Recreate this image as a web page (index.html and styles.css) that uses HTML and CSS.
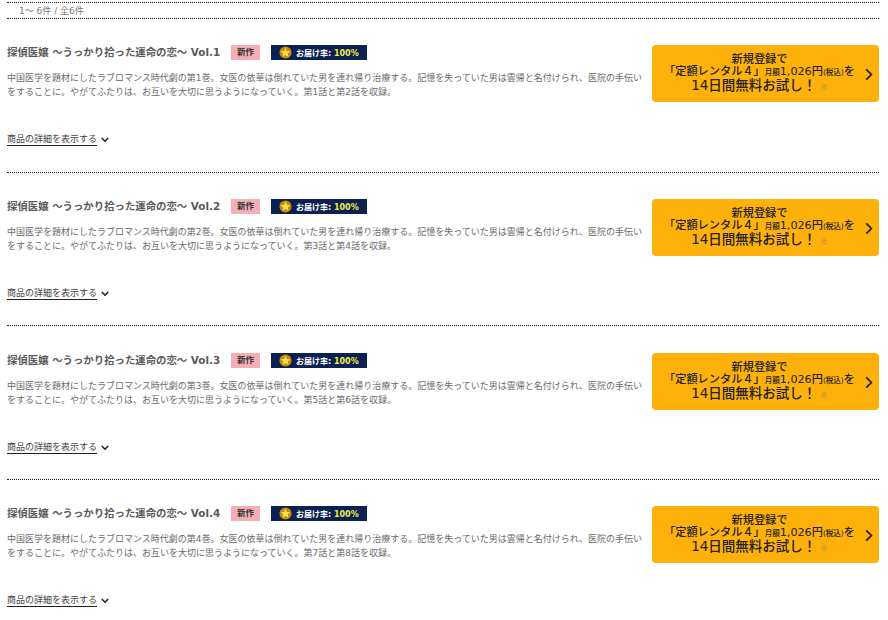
FILE: index.html
```html
<!DOCTYPE html>
<html lang="ja">
<head>
<meta charset="utf-8">
<title>探偵医嬢</title>
<link rel="stylesheet" href="styles.css">
</head>
<body>
<div class="count">1～ 6件 / 全6件</div>
<section class="item">
  <div class="main">
    <div class="head"><h2>探偵医嬢 ～うっかり拾った運命の恋～ Vol.1</h2><span class="new">新作</span>
      <span class="rate"><svg viewBox="0 0 14 14" width="13" height="13"><circle cx="7" cy="7" r="6.5" fill="#c98a10"/><path d="M7 2l1.5 3.3 3.6.4-2.7 2.4.8 3.5L7 9.8l-3.2 1.8.8-3.5-2.7-2.4 3.6-.4z" fill="#ffe14d"/></svg><span>お届け率: <b>100%</b></span></span></div>
    <p>中国医学を題材にしたラブロマンス時代劇の第1巻。女医の依華は倒れていた男を連れ帰り治療する。記憶を失っていた男は雲帰と名付けられ、医院の手伝いをすることに。やがてふたりは、お互いを大切に思うようになっていく。第1話と第2話を収録。</p>
    <div class="more"><a>商品の詳細を表示する</a><svg viewBox="0 0 10 7" width="8" height="6"><path d="M1 1l4 4 4-4" fill="none" stroke="#222" stroke-width="2"/></svg></div>
  </div>
  <a class="cta"><span class="cta-text"><span>新規登録で</span><span class="l2">「定額レンタル４」<small>月額</small>1,026円<small>(税込)</small>を</span><span class="l3">14日間無料お試し！<i>※</i></span></span><svg class="arrow" viewBox="0 0 10 16" width="8" height="13"><path d="M1.5 1.5L8 8l-6.500 6.500" fill="none" stroke="#222" stroke-width="2.200"/></svg></a>
</section>
<section class="item">
  <div class="main">
    <div class="head"><h2>探偵医嬢 ～うっかり拾った運命の恋～ Vol.2</h2><span class="new">新作</span>
      <span class="rate"><svg viewBox="0 0 14 14" width="13" height="13"><circle cx="7" cy="7" r="6.5" fill="#c98a10"/><path d="M7 2l1.5 3.3 3.6.4-2.7 2.4.8 3.5L7 9.8l-3.2 1.8.8-3.5-2.7-2.4 3.6-.4z" fill="#ffe14d"/></svg><span>お届け率: <b>100%</b></span></span></div>
    <p>中国医学を題材にしたラブロマンス時代劇の第2巻。女医の依華は倒れていた男を連れ帰り治療する。記憶を失っていた男は雲帰と名付けられ、医院の手伝いをすることに。やがてふたりは、お互いを大切に思うようになっていく。第3話と第4話を収録。</p>
    <div class="more"><a>商品の詳細を表示する</a><svg viewBox="0 0 10 7" width="8" height="6"><path d="M1 1l4 4 4-4" fill="none" stroke="#222" stroke-width="2"/></svg></div>
  </div>
  <a class="cta"><span class="cta-text"><span>新規登録で</span><span class="l2">「定額レンタル４」<small>月額</small>1,026円<small>(税込)</small>を</span><span class="l3">14日間無料お試し！<i>※</i></span></span><svg class="arrow" viewBox="0 0 10 16" width="8" height="13"><path d="M1.5 1.5L8 8l-6.500 6.500" fill="none" stroke="#222" stroke-width="2.200"/></svg></a>
</section>
<section class="item">
  <div class="main">
    <div class="head"><h2>探偵医嬢 ～うっかり拾った運命の恋～ Vol.3</h2><span class="new">新作</span>
      <span class="rate"><svg viewBox="0 0 14 14" width="13" height="13"><circle cx="7" cy="7" r="6.5" fill="#c98a10"/><path d="M7 2l1.5 3.3 3.6.4-2.7 2.4.8 3.5L7 9.8l-3.2 1.8.8-3.5-2.7-2.4 3.6-.4z" fill="#ffe14d"/></svg><span>お届け率: <b>100%</b></span></span></div>
    <p>中国医学を題材にしたラブロマンス時代劇の第3巻。女医の依華は倒れていた男を連れ帰り治療する。記憶を失っていた男は雲帰と名付けられ、医院の手伝いをすることに。やがてふたりは、お互いを大切に思うようになっていく。第5話と第6話を収録。</p>
    <div class="more"><a>商品の詳細を表示する</a><svg viewBox="0 0 10 7" width="8" height="6"><path d="M1 1l4 4 4-4" fill="none" stroke="#222" stroke-width="2"/></svg></div>
  </div>
  <a class="cta"><span class="cta-text"><span>新規登録で</span><span class="l2">「定額レンタル４」<small>月額</small>1,026円<small>(税込)</small>を</span><span class="l3">14日間無料お試し！<i>※</i></span></span><svg class="arrow" viewBox="0 0 10 16" width="8" height="13"><path d="M1.5 1.5L8 8l-6.500 6.500" fill="none" stroke="#222" stroke-width="2.200"/></svg></a>
</section>
<section class="item">
  <div class="main">
    <div class="head"><h2>探偵医嬢 ～うっかり拾った運命の恋～ Vol.4</h2><span class="new">新作</span>
      <span class="rate"><svg viewBox="0 0 14 14" width="13" height="13"><circle cx="7" cy="7" r="6.5" fill="#c98a10"/><path d="M7 2l1.5 3.3 3.6.4-2.7 2.4.8 3.5L7 9.8l-3.2 1.8.8-3.5-2.7-2.4 3.6-.4z" fill="#ffe14d"/></svg><span>お届け率: <b>100%</b></span></span></div>
    <p>中国医学を題材にしたラブロマンス時代劇の第4巻。女医の依華は倒れていた男を連れ帰り治療する。記憶を失っていた男は雲帰と名付けられ、医院の手伝いをすることに。やがてふたりは、お互いを大切に思うようになっていく。第7話と第8話を収録。</p>
    <div class="more"><a>商品の詳細を表示する</a><svg viewBox="0 0 10 7" width="8" height="6"><path d="M1 1l4 4 4-4" fill="none" stroke="#222" stroke-width="2"/></svg></div>
  </div>
  <a class="cta"><span class="cta-text"><span>新規登録で</span><span class="l2">「定額レンタル４」<small>月額</small>1,026円<small>(税込)</small>を</span><span class="l3">14日間無料お試し！<i>※</i></span></span><svg class="arrow" viewBox="0 0 10 16" width="8" height="13"><path d="M1.5 1.5L8 8l-6.500 6.500" fill="none" stroke="#222" stroke-width="2.200"/></svg></a>
</section>
</body>
</html>
```
FILE: styles.css
```css
html, body { margin: 0; padding: 0; background: #fff; overflow: hidden; height: 620px; }
body { padding: 2px 9px 0 7px; font-family: "DejaVu Sans", "Noto Sans CJK JP", sans-serif; color: #555; }
.count { border-top: 1px dotted #222; border-bottom: 1px dotted #222; height: 15px; line-height: 16px; font-size: 9px; padding-left: 12px; color: #777; }
.item { display: flex; justify-content: space-between; height: 153.670px; padding-top: 26.400px; box-sizing: border-box; border-bottom: 1px dotted #222; }
.main { width: 637px; }
.head { display: flex; align-items: center; height: 15px; }
h2 { margin: 0; font-size: 10.400px; font-weight: 700; color: #5a5a5a; line-height: 15px; white-space: nowrap; width: 224px; }
.new { width: 29px; height: 15px; background: #f4afb4; color: #333; font-size: 8.500px; font-weight: 700; text-align: center; line-height: 15px; margin-right: 11px; }
.rate { width: 96px; height: 15px; background: #0b2151; color: #fff; display: flex; align-items: center; gap: 4px; padding-left: 8px; box-sizing: border-box; font-size: 8px; font-weight: 700; white-space: nowrap; }
.rate b { color: #f4ee4a; }
p { margin: 11px 0 0; font-size: 9px; line-height: 14px; color: #6a6a6a; }
.more { margin-top: 35px; display: flex; align-items: center; gap: 4px; font-size: 9px; line-height: 11px; color: #444; }
.more a { border-bottom: 1px solid #222; line-height: 11px; }
.cta { width: 227px; height: 57px; background: #fdb10a; border-radius: 4px; display: flex; align-items: center; justify-content: center; color: #222; position: relative; }
.cta-text { display: flex; flex-direction: column; align-items: center; font-weight: 500; font-size: 11.200px; line-height: 14px; white-space: nowrap; margin-right: 12px; }
.cta-text span { line-height: 14px; }
.cta small { font-size: 7.500px; }
.cta-text .l2 { margin-top: -2px; }
.cta-text .l3 { font-size: 13.500px; line-height: 14px; margin-top: -2px; }
.l3 i { font-family: "Noto Sans CJK JP", sans-serif; font-size: 7.500px; font-weight: 400; font-style: normal; color: #a08a50; margin-left: 4px; }
.arrow { position: absolute; right: 6px; top: 23px; }
```
